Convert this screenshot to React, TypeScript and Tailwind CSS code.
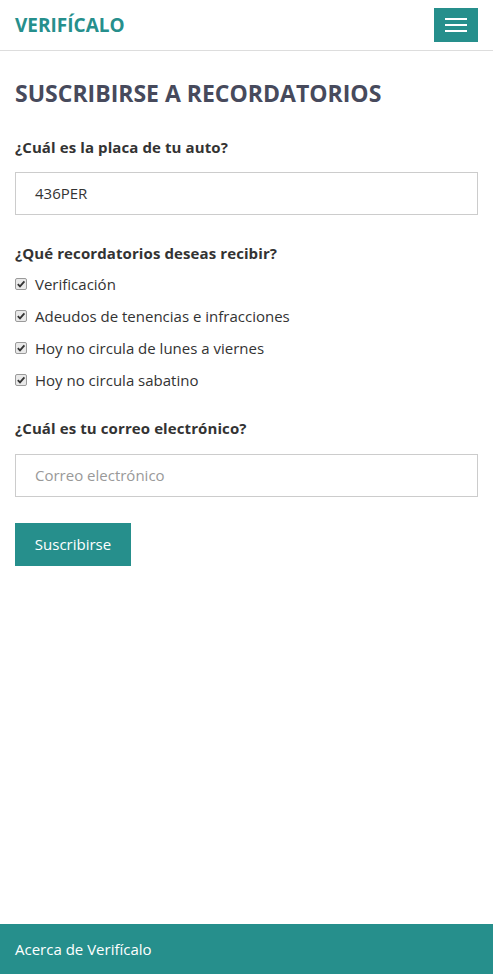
const REMINDERS = [
  "Verificación",
  "Adeudos de tenencias e infracciones",
  "Hoy no circula de lunes a viernes",
  "Hoy no circula sabatino",
];

function CheckBox() {
  return (
    <span className="w-[12px] h-[12px] shrink-0 rounded-[2px] border border-[#9a9a9a] bg-[#e9e9e9] flex items-center justify-center">
      <svg width="10" height="10" viewBox="0 0 10 10">
        <path d="M1.8 5.2 L4 7.4 L8.4 2.4" fill="none" stroke="#333" strokeWidth="1.8" />
      </svg>
    </span>
  );
}

export default function App() {
  return (
    <div
      className="min-h-screen flex flex-col bg-white text-[#333]"
      style={{ fontFamily: '"Open Sans", "Noto Sans", sans-serif' }}
    >
      {/* Navigation */}
      <nav className="h-[51px] border-b border-[#ddd] px-[15px] flex items-center justify-between">
        <span className="text-[19px] font-bold text-[#268f8c] leading-none">VERIFÍCALO</span>
        <button className="w-[44px] h-[34px] bg-[#268f8c] flex flex-col items-center justify-center gap-[4px]">
          <span className="block w-[22px] h-[2px] bg-white" />
          <span className="block w-[22px] h-[2px] bg-white" />
          <span className="block w-[22px] h-[2px] bg-white" />
        </button>
      </nav>

      <main className="flex-1 px-[15px] pt-[27px]">
        <h1 className="text-[23px] font-bold text-[#474a5c] leading-[30px]">
          SUSCRIBIRSE A RECORDATORIOS
        </h1>

        <label className="block mt-[29px] text-[15px] font-bold leading-[20px] tracking-[0.1px]">¿Cuál es la placa de tu auto?</label>
        <div className="mt-[15px] h-[43px] border border-[#ccc] px-[19px] flex items-center text-[15px]">436PER</div>

        <label className="block mt-[28px] text-[15px] font-bold leading-[20px] tracking-[0.1px]">¿Qué recordatorios deseas recibir?</label>
        <div className="mt-[5px] flex flex-col">
          {REMINDERS.map((r) => (
            <div key={r} className="h-[32px] flex items-center gap-[8px] text-[15px]">
              <CheckBox />
              <span>{r}</span>
            </div>
          ))}
        </div>

        <label className="block mt-[22px] text-[15px] font-bold leading-[20px] tracking-[0.1px]">¿Cuál es tu correo electrónico?</label>
        <div className="mt-[16px] h-[43px] border border-[#ccc] px-[19px] flex items-center text-[15px] text-[#999]">
          Correo electrónico
        </div>

        <button className="mt-[26px] w-[116px] h-[43px] bg-[#268f8c] text-white text-[15px]">Suscribirse</button>
      </main>

      {/* Footer */}
      <footer className="h-[50px] bg-[#268f8c] px-[15px] flex items-center text-white text-[15px]">
        Acerca de Verifícalo
      </footer>
    </div>
  );
}
